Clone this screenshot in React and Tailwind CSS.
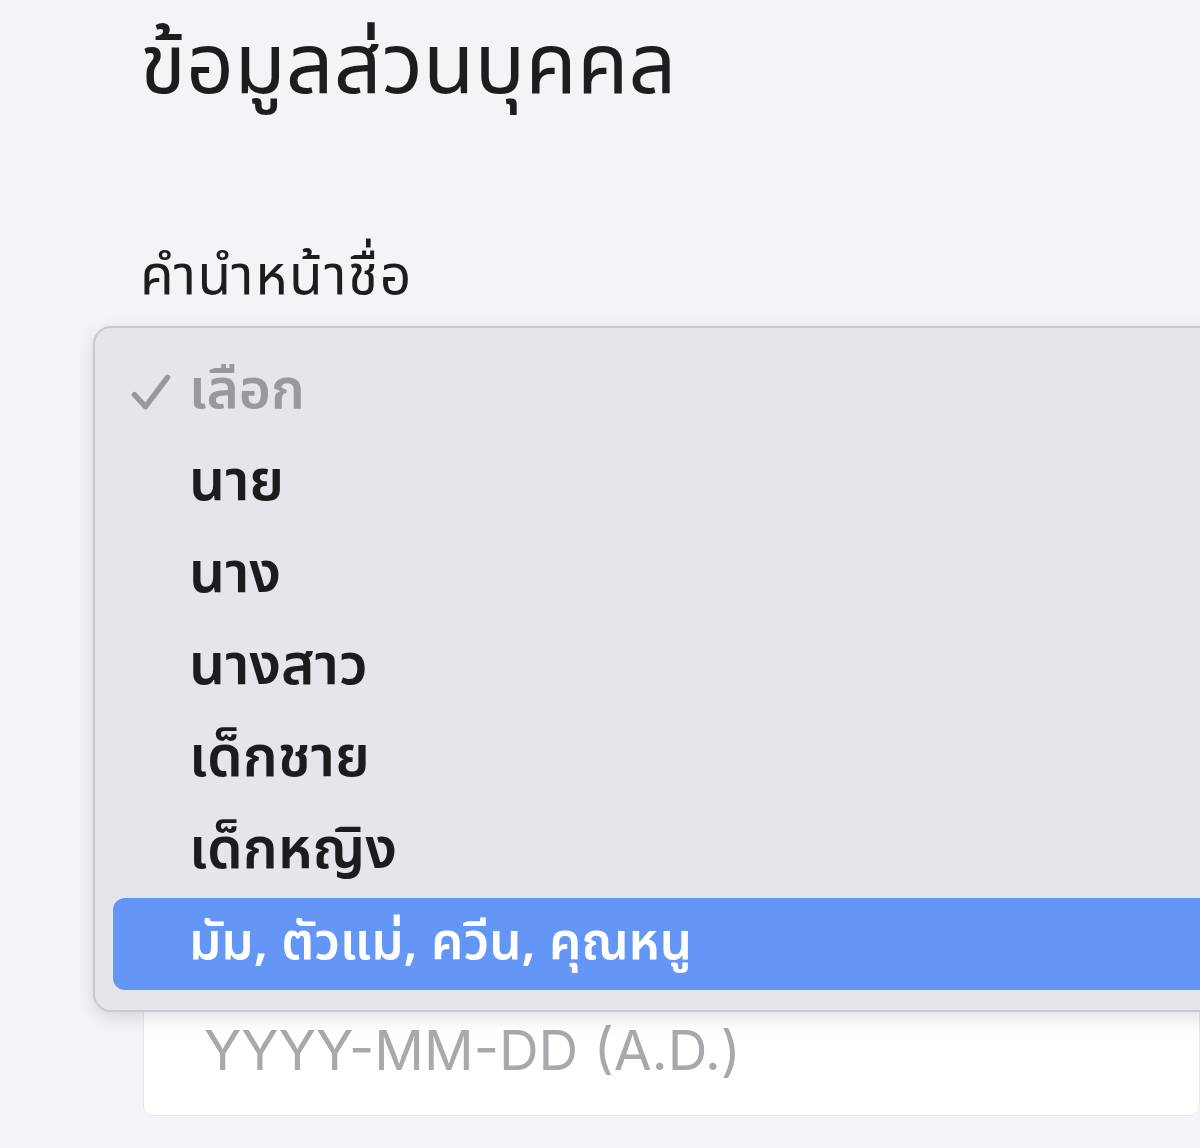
import React from 'react';

const OPTIONS = ['นาย', 'นาง', 'นางสาว', 'เด็กชาย', 'เด็กหญิง'];
const SELECTED = 'มัม, ตัวแม่, ควีน, คุณหนู';

function Check() {
  return (
    <svg viewBox="0 0 24 24" className="w-[44px] h-[44px]" fill="none" stroke="currentColor" strokeWidth="3" strokeLinecap="round" strokeLinejoin="round">
      <path d="M3 13.5l6 6.5L21 4" />
    </svg>
  );
}

export default function App() {
  return (
    <div
      className="min-h-[1148px] w-[1200px] overflow-hidden bg-[#f3f4f8] text-[#1d1d20]"
      style={{ fontFamily: '"Noto Sans Thai", "Noto Sans", "DejaVu Sans", sans-serif' }}
    >
      <div className="pl-[140px] pt-[22px]">
        <h1 className="text-[84px] leading-[92px] font-normal">ข้อมูลส่วนบุคคล</h1>
        <div className="mt-[132px] text-[55px] leading-[64px] tracking-[1.5px]">คำนำหน้าชื่อ</div>
      </div>

      <div className="relative mt-[16px]">
        {/* select field and date input underneath the open menu */}
        <div className="ml-[143px] h-[100px] rounded-[10px] bg-white" />
        <div className="h-[580px]" />
        <div
          className="ml-[143px] h-[110px] rounded-b-[10px] bg-white border border-[#e6e7ec] flex items-start pt-[2px] pl-[60px] text-[55px] text-[#a9a9ad]"
          style={{ fontFamily: '"Inter", "Liberation Sans", sans-serif' }}
        >
          YYYY-MM-DD (A.D.)
        </div>

        {/* open dropdown menu */}
        <div className="absolute left-[93px] top-[0px] w-[1200px] rounded-[18px] border-2 border-[#c9cacf] bg-[#e5e6eb] shadow-[0_6px_18px_rgba(0,0,0,0.12)] pt-[18px] pb-[20px] pl-[18px]">
          <div className="flex items-center h-[92px] text-[#98989d]">
            <div className="w-[76px] flex justify-center"><Check /></div>
            <span className="text-[55px] font-semibold">เลือก</span>
          </div>
          {OPTIONS.map((o) => (
            <div key={o} className="flex items-center h-[92px] pl-[76px] text-[57px] font-semibold text-[#1c1c1e]">
              {o}
            </div>
          ))}
          <div className="flex items-center h-[92px] pl-[76px] rounded-[12px] bg-[#6497f5] text-[51px] font-semibold text-white">
            {SELECTED}
          </div>
        </div>
      </div>
    </div>
  );
}
